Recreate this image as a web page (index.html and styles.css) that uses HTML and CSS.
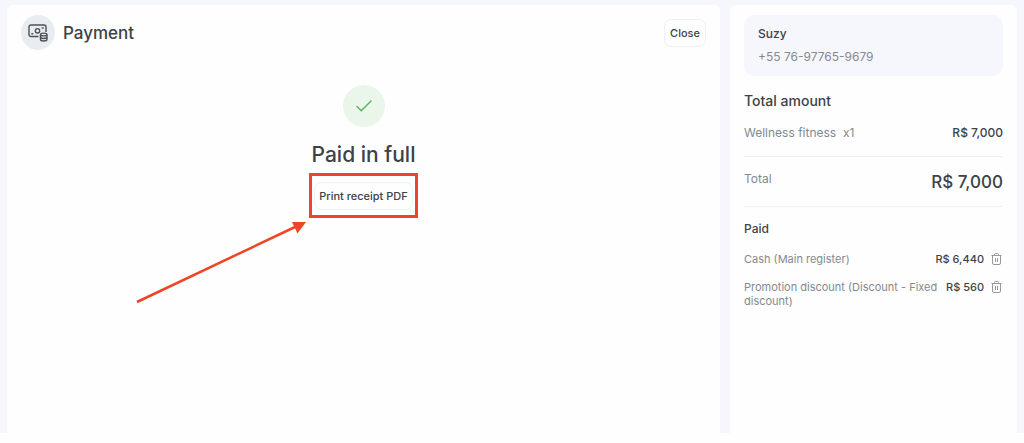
FILE: index.html
```html
<!DOCTYPE html>
<html lang="en">
<head>
  <meta charset="UTF-8">
  <meta name="viewport" content="width=device-width, initial-scale=1.0">
  <title>Payment</title>
  <link rel="stylesheet" href="styles.css">
</head>
<body>
  <div class="app">
    <main class="panel payment">
      <header class="header">
        <span class="header-icon">
          <svg width="20" height="18" viewBox="0 0 20 18" fill="none" stroke="#4b5157" stroke-width="1.4">
            <path d="M10.5 12.5H3A2 2 0 0 1 1 10.500V3a2 2 0 0 1 2-2h13a2 2 0 0 1 2 2v5"/>
            <circle cx="9.500" cy="6.800" r="2.200"/>
            <path d="M3.800 9.700h1M14.200 4h1" stroke-linecap="round"/>
            <path d="M12.500 10.500v5c0 .9 1.400 1.500 3.200 1.500s3.200-.6 3.200-1.500v-5" fill="#e9edf1"/>
            <ellipse cx="15.700" cy="10.500" rx="3.200" ry="1.400" fill="#e9edf1"/>
            <path d="M12.500 13c0 .9 1.400 1.500 3.200 1.500s3.200-.6 3.200-1.500"/>
          </svg>
        </span>
        <h1>Payment</h1>
        <button class="btn close">Close</button>
      </header>

      <section class="status">
        <span class="check">
          <svg width="16" height="12" viewBox="0 0 16 12" fill="none" stroke="#5fb55f" stroke-width="1.500" stroke-linecap="round" stroke-linejoin="round">
            <path d="M1 6.500 5.300 10.800 15 1"/>
          </svg>
        </span>
        <h2>Paid in full</h2>
        <div class="highlight">
          <button class="btn print">Print receipt PDF</button>
          <svg class="arrow" width="172" height="84" viewBox="0 0 172 84">
            <path d="M2 81 160 6" stroke="#ed4526" stroke-width="2.500"/>
            <path d="M171 1 157 1 162.500 12.500Z" fill="#ed4526"/>
          </svg>
        </div>
      </section>
    </main>

    <aside class="panel summary">
      <div class="customer">
        <p class="customer-name">Suzy</p>
        <p class="customer-phone">+55 76-97765-9679</p>
      </div>

      <h3>Total amount</h3>
      <div class="row item">
        <span>Wellness fitness&nbsp; x1</span>
        <strong>R$ 7,000</strong>
      </div>
      <div class="row total">
        <span>Total</span>
        <strong>R$ 7,000</strong>
      </div>

      <h4>Paid</h4>
      <div class="row paid">
        <span class="label">Cash (Main register)</span>
        <strong>R$ 6,440</strong>
        <button class="delete" aria-label="Delete cash payment">
          <svg width="11" height="12" viewBox="0 0 11 12" fill="none" stroke="#94999e">
            <path d="M.5 2.500h10M3.500 2.500v-1a1 1 0 0 1 1-1h2a1 1 0 0 1 1 1v1M1.500 2.500v7.500a1.500 1.500 0 0 0 1.500 1.500h5a1.500 1.500 0 0 0 1.500-1.500V2.500M4.500 5v4M6.500 5v4"/>
          </svg>
        </button>
      </div>
      <div class="row paid">
        <span class="label">Promotion discount (Discount - Fixed discount)</span>
        <strong>R$ 560</strong>
        <button class="delete" aria-label="Delete promotion discount">
          <svg width="11" height="12" viewBox="0 0 11 12" fill="none" stroke="#94999e">
            <path d="M.5 2.500h10M3.500 2.500v-1a1 1 0 0 1 1-1h2a1 1 0 0 1 1 1v1M1.500 2.500v7.500a1.500 1.500 0 0 0 1.500 1.500h5a1.500 1.500 0 0 0 1.500-1.500V2.500M4.500 5v4M6.500 5v4"/>
          </svg>
        </button>
      </div>
    </aside>
  </div>
</body>
</html>
```
FILE: styles.css
```css
/* General Styles */
* {
  box-sizing: border-box;
}

body {
  font-family: Inter, 'Liberation Sans', sans-serif;
  margin: 0;
  padding: 0 0 10px;
  background: #fefefe;
  color: #3c4248;
}

h1, h2, h3, h4, p {
  margin: 0;
  font-weight: 500;
}

.app {
  display: flex;
  gap: 10px;
  min-height: calc(100vh - 10px);
  padding: 5px 7px 0;
  background: #f6f7fc;
}

.panel {
  background: #fefefe;
  border-radius: 6px 6px 0 0;
}

.btn {
  font-family: inherit;
  font-size: 11px;
  font-weight: 500;
  line-height: 16px;
  padding: 5px 4px;
  border: 1px solid #eff0f4;
  border-radius: 7px;
  background: #fefefe;
  color: #3c4248;
  cursor: pointer;
}

/* Payment Section */
.payment {
  flex: 1;
}

.header {
  display: flex;
  align-items: center;
  gap: 8px;
  padding: 10px 14px;
}

.header-icon {
  display: flex;
  justify-content: center;
  align-items: center;
  width: 34px;
  height: 35px;
  border-radius: 50%;
  background: #e9edf1;
}

.header h1 {
  font-size: 17px;
  line-height: 24px;
}

.close {
  min-width: 42px;
  margin-left: auto;
}

.status {
  display: flex;
  flex-direction: column;
  align-items: center;
  padding-top: 25px;
}

.check {
  display: flex;
  justify-content: center;
  align-items: center;
  width: 42px;
  height: 42px;
  border-radius: 50%;
  background: #e9f6e9;
}

.status h2 {
  margin: 13px 0 4px;
  font-size: 21px;
  line-height: 29px;
}

/* Highlighted button with the arrow that points to it */
.highlight {
  position: relative;
  padding: 6px 2px 5px;
  border: 3px solid #ed4526;
}

.arrow {
  position: absolute;
  top: 45px;
  right: 108px;
}

/* Summary Section */
.summary {
  width: 287px;
  padding: 10px 14px;
}

.customer {
  padding: 10px 14px;
  border-radius: 10px;
  background: #f6f7fc;
  font-size: 12px;
}

.customer-name {
  line-height: 18px;
}

.customer-phone {
  margin-top: 5px;
  font-weight: 400;
  line-height: 18px;
  color: #85898f;
}

.summary h3 {
  margin-top: 16px;
  font-size: 14px;
  line-height: 18px;
}

.row {
  display: flex;
  justify-content: space-between;
  font-size: 12px;
  line-height: 16px;
  color: #85898f;
}

.row strong {
  font-weight: 500;
  color: #3c4248;
  white-space: nowrap;
}

.item {
  padding: 15px 0;
  border-bottom: 1px solid #eff0f4;
}

.total {
  padding: 14px 0 13px;
  border-bottom: 1px solid #eff0f4;
}

.total strong {
  font-size: 17px;
  line-height: 22px;
}

.summary h4 {
  margin: 14px 0 15px;
  font-size: 12px;
  line-height: 16px;
}

.paid {
  gap: 6px;
  margin-bottom: 14px;
  font-size: 11px;
  line-height: 14px;
}

.paid .label {
  flex: 1;
}

.delete {
  height: 14px;
  padding: 1px;
  border: none;
  background: none;
  cursor: pointer;
}

.delete svg {
  display: block;
}
```
